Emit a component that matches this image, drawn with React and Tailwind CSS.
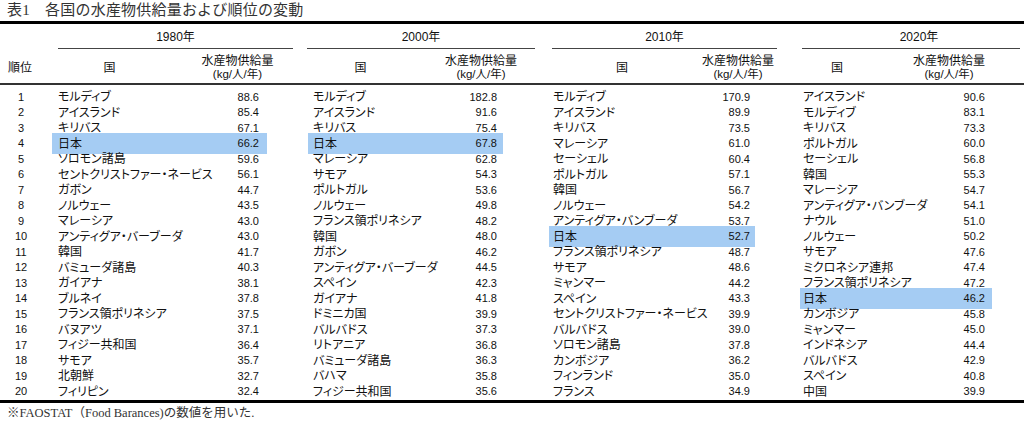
import React from "react";

const COLS =
  "grid grid-cols-[52px_158px_57px_41px_137px_58px_46px_151px_55px_45px_135px_57px_32px]";

const groups = [
  {
    year: "1980",
    yearCell: "pl-[6px] pr-[15px]",
    yearText: "",
    namePad: "pl-[6px]",
    valPad: "pr-[8px]",
    kuni: "w-[122px]",
    sui: "w-[150px]",
    rows: [
      ["モルディブ", "88.6"],
      ["アイスランド", "85.4"],
      ["キリバス", "67.1"],
      ["日本", "66.2", true],
      ["ソロモン諸島", "59.6"],
      ["セントクリストファー・ネービス", "56.1"],
      ["ガボン", "44.7"],
      ["ノルウェー", "43.5"],
      ["マレーシア", "43.0"],
      ["アンティグア・バーブーダ", "43.0"],
      ["韓国", "41.7"],
      ["バミューダ諸島", "40.3"],
      ["ガイアナ", "38.1"],
      ["ブルネイ", "37.8"],
      ["フランス領ポリネシア", "37.5"],
      ["バヌアツ", "37.1"],
      ["フィジー共和国", "36.4"],
      ["サモア", "35.7"],
      ["北朝鮮", "32.7"],
      ["フィリピン", "32.4"],
    ],
  },
  {
    year: "2000",
    yearCell: "-ml-[1px] pr-[14px]",
    yearText: "",
    namePad: "pl-[5px]",
    valPad: "pr-[6px]",
    kuni: "w-[108px]",
    sui: "w-[140px]",
    rows: [
      ["モルディブ", "182.8"],
      ["アイスランド", "91.6"],
      ["キリバス", "75.4"],
      ["日本", "67.8", true],
      ["マレーシア", "62.8"],
      ["サモア", "54.3"],
      ["ポルトガル", "53.6"],
      ["ノルウェー", "49.8"],
      ["フランス領ポリネシア", "48.2"],
      ["韓国", "48.0"],
      ["ガボン", "46.2"],
      ["アンティグア・バーブーダ", "44.5"],
      ["スペイン", "42.3"],
      ["ガイアナ", "41.8"],
      ["ドミニカ国", "39.9"],
      ["バルバドス", "37.3"],
      ["リトアニア", "36.8"],
      ["バミューダ諸島", "36.3"],
      ["バハマ", "35.8"],
      ["フィジー共和国", "35.6"],
    ],
  },
  {
    year: "2010",
    yearCell: "pl-[3px] pr-[23px]",
    yearText: "",
    namePad: "pl-[4px]",
    valPad: "pr-[5px]",
    kuni: "w-[146px]",
    sui: "w-[86px]",
    rows: [
      ["モルディブ", "170.9"],
      ["アイスランド", "89.9"],
      ["キリバス", "73.5"],
      ["マレーシア", "61.0"],
      ["セーシェル", "60.4"],
      ["ポルトガル", "57.1"],
      ["韓国", "56.7"],
      ["ノルウェー", "54.2"],
      ["アンティグア・バンブーダ", "53.7"],
      ["日本", "52.7", true],
      ["フランス領ポリネシア", "48.7"],
      ["サモア", "48.6"],
      ["ミャンマー", "44.2"],
      ["スペイン", "43.3"],
      ["セントクリストファー・ネービス", "39.9"],
      ["バルバドス", "39.0"],
      ["ソロモン諸島", "37.8"],
      ["カンボジア", "36.2"],
      ["フィンランド", "35.0"],
      ["フランス", "34.9"],
    ],
  },
  {
    year: "2020",
    yearCell: "pl-[2px] pr-[4px]",
    yearText: "pl-[16px]",
    namePad: "pl-[3px]",
    valPad: "pr-[7px]",
    kuni: "w-[86px]",
    sui: "w-[174px]",
    rows: [
      ["アイスランド", "90.6"],
      ["モルディブ", "83.1"],
      ["キリバス", "73.3"],
      ["ポルトガル", "60.0"],
      ["セーシェル", "56.8"],
      ["韓国", "55.3"],
      ["マレーシア", "54.7"],
      ["アンティグア・バンブーダ", "54.1"],
      ["ナウル", "51.0"],
      ["ノルウェー", "50.2"],
      ["サモア", "47.6"],
      ["ミクロネシア連邦", "47.4"],
      ["フランス領ポリネシア", "47.2"],
      ["日本", "46.2", true],
      ["カンボジア", "45.8"],
      ["ミャンマー", "45.0"],
      ["インドネシア", "44.4"],
      ["バルバドス", "42.9"],
      ["スペイン", "40.8"],
      ["中国", "39.9"],
    ],
  },
];

const HL = "bg-[#a5ccf3] -my-[1.5px]";

export default function App() {
  return (
    <div className="w-[1024px] h-[421px] bg-white text-[#111] overflow-hidden font-['Liberation_Sans','Noto_Sans_CJK_JP',sans-serif] [font-feature-settings:'palt']">
      {/* Title */}
      <div className="h-[21px] flex items-center pl-[7px] text-[15px] tracking-[0.2px] leading-none font-['Liberation_Serif','Noto_Sans_CJK_JP',serif] [font-feature-settings:normal] text-[#333]">
        表1　各国の水産物供給量および順位の変動
      </div>
      <div className="h-[2.5px] bg-black" />

      {/* Year row */}
      <div className={COLS}>
        <div />
        {groups.map((g) => (
          <div key={g.year} className={`col-span-3 ${g.yearCell}`}>
            <div
              className={`h-[25.5px] pt-[3px] flex items-center justify-center border-b border-[#444] text-[12px] ${g.yearText}`}
            >
              {g.year}年
            </div>
          </div>
        ))}
      </div>

      {/* Sub header */}
      <div className={`${COLS} h-[34px]`}>
        <div className="flex items-center pl-[8px] pt-[4px] text-[12px]">順位</div>
        {groups.map((g) => (
          <div key={g.year} className="col-span-3 flex items-center pt-[4px] text-[12px]">
            <div className={`${g.kuni} text-center`}>国</div>
            <div className={`${g.sui} text-center leading-[13px]`}>
              <div>水産物供給量</div>
              <div className="text-[11.5px]">(kg/人/年)</div>
            </div>
          </div>
        ))}
      </div>
      <div className="h-[2px] bg-[#333]" />

      {/* Data */}
      <div className="pt-[3px] pb-[2px]">
        {Array.from({ length: 20 }).map((_, i) => (
          <div key={i} className={`${COLS} h-[15.5px]`}>
            <div className="w-[42px] flex items-center justify-center text-[11px]">{i + 1}</div>
            {groups.map((g) => {
              const [name, val, hl] = g.rows[i];
              return (
                <React.Fragment key={g.year}>
                  <div
                    className={`flex items-center whitespace-nowrap text-[12px] ${g.namePad} ${hl ? HL : ""}`}
                  >
                    {name}
                  </div>
                  <div
                    className={`flex items-center justify-end text-[11px] ${g.valPad} ${hl ? HL : ""}`}
                  >
                    {val}
                  </div>
                  <div />
                </React.Fragment>
              );
            })}
          </div>
        ))}
      </div>
      <div className="h-[3px] bg-black" />

      {/* Footer */}
      <div className="h-[18px] flex items-center pl-[7px] pt-[2px] text-[12.5px] leading-none font-['Liberation_Serif','Noto_Sans_CJK_JP',serif] [font-feature-settings:normal] text-[#333]">
        ※FAOSTAT（Food Barances)の数値を用いた.
      </div>
    </div>
  );
}
